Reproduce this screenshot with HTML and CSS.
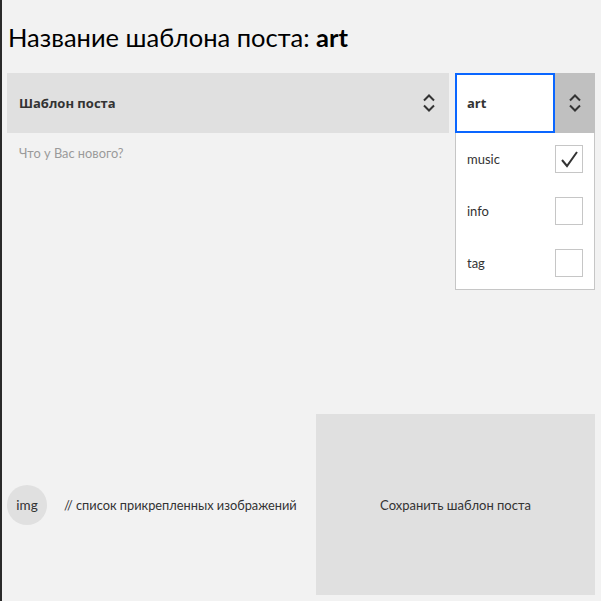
FILE: index.html
```html
<!DOCTYPE html>
<html lang="ru">
<head>
<meta charset="utf-8">
<title>Шаблон поста</title>
<link rel="stylesheet" href="styles.css">
</head>
<body>
<div class="page">
  <h1 class="title">Название шаблона поста: <b>art</b></h1>
  <div class="selects">
    <div class="select-main">
      <span class="select-label">Шаблон поста</span>
      <svg class="chev" width="14" height="20" viewBox="0 0 14 20"><polyline points="2,7.5 7,2.5 12,7.5" /><polyline points="2,12.5 7,17.5 12,12.5" /></svg>
    </div>
    <div class="tag-select">
      <div class="tag-head">
        <div class="tag-input">art</div>
        <div class="tag-btn">
          <svg class="chev" width="14" height="20" viewBox="0 0 14 20"><polyline points="2,7.5 7,2.5 12,7.5" /><polyline points="2,12.5 7,17.5 12,12.5" /></svg>
        </div>
      </div>
      <ul class="tag-list">
        <li class="tag-item"><span>music</span><span class="check checked"><svg width="26" height="26" viewBox="0 0 26 26"><polyline points="6,14 11,20 21,6" /></svg></span></li>
        <li class="tag-item"><span>info</span><span class="check"></span></li>
        <li class="tag-item"><span>tag</span><span class="check"></span></li>
      </ul>
    </div>
  </div>
  <div class="post-text">Что у Вас нового?</div>
  <div class="bottom">
    <div class="attach">
      <div class="img-thumb">img</div>
      <div class="attach-text">// список прикрепленных изображений</div>
    </div>
    <div class="save">Сохранить шаблон поста</div>
  </div>
</div>
</body>
</html>
```

FILE: styles.css
```css
* { box-sizing: border-box; }
html, body {
  margin: 0;
  padding: 0;
  height: 100%;
}
body {
  background: #f2f2f2;
  font-family: Lato, "Open Sans", sans-serif;
  color: #333;
  border-left: 2px solid #2a2a2a;
}
.page {
  height: 601px;
  padding: 0 6px 6px 5px;
  display: flex;
  flex-direction: column;
}
.title {
  margin: 20px 0 0 1px;
  font-size: 25.5px;
  font-weight: 400;
  line-height: 34px;
  color: #000;
  height: 53px;
}
.title b { font-weight: 700; }
.selects {
  display: flex;
  gap: 6px;
  height: 60px;
}
.select-main {
  flex: 1;
  background: #e0e0e0;
  display: flex;
  align-items: center;
  justify-content: space-between;
  padding: 0 13px 0 12px;
}
.select-label {
  font-family: "Open Sans", sans-serif;
  font-weight: 700;
  font-size: 13px;
}
.chev polyline {
  fill: none;
  stroke: #333;
  stroke-width: 2;
}
.tag-select {
  width: 140px;
  position: relative;
}
.tag-head {
  display: flex;
  height: 60px;
}
.tag-input {
  width: 100px;
  background: #fff;
  border: 2px solid #0a66ff;
  display: flex;
  align-items: center;
  padding-left: 10px;
  font-family: "Open Sans", sans-serif;
  font-weight: 700;
  font-size: 13px;
}
.tag-btn {
  flex: 1;
  background: #c0c0c0;
  display: flex;
  align-items: center;
  justify-content: center;
}
.tag-list {
  position: absolute;
  top: 60px;
  left: 0;
  width: 140px;
  margin: 0;
  padding: 0;
  list-style: none;
  background: #fff;
  border: 1px solid #c6c6c6;
  border-top: none;
}
.tag-item {
  height: 52px;
  display: flex;
  align-items: center;
  justify-content: space-between;
  padding: 0 11px 0 11px;
  font-size: 13px;
}
.check {
  width: 28px;
  height: 28px;
  border: 1px solid #c6c6c6;
  display: flex;
  align-items: center;
  justify-content: center;
}
.check polyline {
  fill: none;
  stroke: #333;
  stroke-width: 2;
}
.post-text {
  padding: 12px 0 0 12px;
  font-size: 12.8px;
  color: #9a9a9a;
  flex: 1;
}
.bottom {
  display: flex;
  height: 181px;
}
.attach {
  width: 309px;
  display: flex;
  align-items: center;
  gap: 17px;
}
.img-thumb {
  width: 40px;
  height: 40px;
  border-radius: 50%;
  background: #e0e0e0;
  display: flex;
  align-items: center;
  justify-content: center;
  font-size: 13.5px;
}
.attach-text {
  font-size: 12.8px;
  white-space: nowrap;
}
.save {
  flex: 1;
  background: #e0e0e0;
  display: flex;
  align-items: center;
  justify-content: center;
  font-size: 13px;
}
```
